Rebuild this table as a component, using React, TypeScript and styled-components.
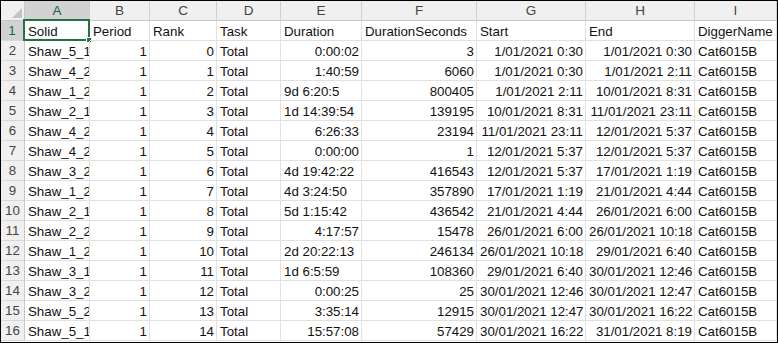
import styled, { createGlobalStyle } from 'styled-components';

const GlobalStyle = createGlobalStyle`
  body {
    margin: 0;
    background: #ffffff;
    font-family: 'Liberation Sans', Arial, sans-serif;
  }
`;

const colWidths = [24, 65, 60, 67, 64, 81, 115, 109, 109, 82];
const letters = ['A', 'B', 'C', 'D', 'E', 'F', 'G', 'H', 'I'];

const Frame = styled.div`
  width: 776px;
  height: 341px;
  border: 1px solid #000;
  overflow: hidden;
  background: #fff;
`;

const Sheet = styled.div`
  display: grid;
  grid-template-columns: ${colWidths.map((w) => `${w}px`).join(' ')};
  grid-auto-rows: 20px;
  font-size: 13.3px;
  color: #111;
`;

const ColHead = styled.div<{ $active?: boolean }>`
  background: ${({ $active }) => ($active ? '#d2d2d2' : '#f0f0f0')};
  color: ${({ $active }) => ($active ? '#0e6b3a' : '#444')};
  border-right: 1px solid #d0d0d0;
  border-bottom: ${({ $active }) => ($active ? '2px solid #217346' : '1px solid #c8c8c8')};
  display: flex;
  align-items: center;
  justify-content: center;
  box-sizing: border-box;
  font-size: 13.5px;
`;

const Corner = styled.div`
  background: #f0f0f0;
  border-right: 1px solid #c8c8c8;
  border-bottom: 1px solid #c8c8c8;
  box-sizing: border-box;
  display: flex;
  align-items: flex-end;
  justify-content: flex-end;
  padding: 0 2px 2px 0;
`;

const RowHead = styled.div<{ $active?: boolean }>`
  background: ${({ $active }) => ($active ? '#d2d2d2' : '#f0f0f0')};
  color: ${({ $active }) => ($active ? '#0e6b3a' : '#444')};
  border-right: ${({ $active }) => ($active ? '2px solid #217346' : '1px solid #c8c8c8')};
  border-bottom: 1px solid #d8d8d8;
  box-sizing: border-box;
  display: flex;
  align-items: center;
  justify-content: center;
  font-size: 13.3px;
`;

const Cell = styled.div<{ $right?: boolean }>`
  position: relative;
  border-right: 1px solid #e1e1e1;
  border-bottom: 1px solid #e1e1e1;
  box-sizing: border-box;
  padding: 1px 2px 0 3px;
  line-height: 19px;
  white-space: nowrap;
  overflow: hidden;
  text-align: ${({ $right }) => ($right ? 'right' : 'left')};
`;

const SelectedCell = styled(Cell)`
  overflow: visible;
`;

const SelBox = styled.div`
  position: absolute;
  left: -2px;
  top: -2px;
  right: -1px;
  bottom: -1px;
  border: 2px solid #217346;
  pointer-events: none;
`;

const SelHandle = styled.div`
  position: absolute;
  right: -4px;
  bottom: -4px;
  width: 6px;
  height: 6px;
  background: #217346;
  border: 1px solid #fff;
  box-sizing: border-box;
`;

type Row = {
  solid: string;
  rank: number;
  dur: string;
  secs: number;
  start: string;
  end: string;
};

const rows: Row[] = [
  { solid: 'Shaw_5_19_a', rank: 0, dur: '0:00:02', secs: 3, start: '1/01/2021 0:30', end: '1/01/2021 0:30' },
  { solid: 'Shaw_4_22_a', rank: 1, dur: '1:40:59', secs: 6060, start: '1/01/2021 0:30', end: '1/01/2021 2:11' },
  { solid: 'Shaw_1_21_a', rank: 2, dur: '9d 6:20:5', secs: 800405, start: '1/01/2021 2:11', end: '10/01/2021 8:31' },
  { solid: 'Shaw_2_19_a', rank: 3, dur: '1d 14:39:54', secs: 139195, start: '10/01/2021 8:31', end: '11/01/2021 23:11' },
  { solid: 'Shaw_4_22_b', rank: 4, dur: '6:26:33', secs: 23194, start: '11/01/2021 23:11', end: '12/01/2021 5:37' },
  { solid: 'Shaw_4_22_c', rank: 5, dur: '0:00:00', secs: 1, start: '12/01/2021 5:37', end: '12/01/2021 5:37' },
  { solid: 'Shaw_3_21_a', rank: 6, dur: '4d 19:42:22', secs: 416543, start: '12/01/2021 5:37', end: '17/01/2021 1:19' },
  { solid: 'Shaw_1_21_b', rank: 7, dur: '4d 3:24:50', secs: 357890, start: '17/01/2021 1:19', end: '21/01/2021 4:44' },
  { solid: 'Shaw_2_19_b', rank: 8, dur: '5d 1:15:42', secs: 436542, start: '21/01/2021 4:44', end: '26/01/2021 6:00' },
  { solid: 'Shaw_2_21_a', rank: 9, dur: '4:17:57', secs: 15478, start: '26/01/2021 6:00', end: '26/01/2021 10:18' },
  { solid: 'Shaw_1_21_c', rank: 10, dur: '2d 20:22:13', secs: 246134, start: '26/01/2021 10:18', end: '29/01/2021 6:40' },
  { solid: 'Shaw_3_19_a', rank: 11, dur: '1d 6:5:59', secs: 108360, start: '29/01/2021 6:40', end: '30/01/2021 12:46' },
  { solid: 'Shaw_3_21_b', rank: 12, dur: '0:00:25', secs: 25, start: '30/01/2021 12:46', end: '30/01/2021 12:47' },
  { solid: 'Shaw_5_21_a', rank: 13, dur: '3:35:14', secs: 12915, start: '30/01/2021 12:47', end: '30/01/2021 16:22' },
  { solid: 'Shaw_5_19_b', rank: 14, dur: '15:57:08', secs: 57429, start: '30/01/2021 16:22', end: '31/01/2021 8:19' },
];

const headers = ['Solid', 'Period', 'Rank', 'Task', 'Duration', 'DurationSeconds', 'Start', 'End', 'DiggerName'];

export default function App() {
  return (
    <>
      <GlobalStyle />
      <Frame>
        <Sheet>
          <Corner>
            <svg width="10" height="10" viewBox="0 0 10 10">
              <polygon points="10,0 10,10 0,10" fill="#c4c4c4" />
            </svg>
          </Corner>
          {letters.map((l, i) => (
            <ColHead key={l} $active={i === 0}>{l}</ColHead>
          ))}

          <RowHead $active>1</RowHead>
          {headers.map((h, i) =>
            i === 0 ? (
              <SelectedCell key={h}>
                {h}
                <SelBox>
                  <SelHandle />
                </SelBox>
              </SelectedCell>
            ) : (
              <Cell key={h}>{h}</Cell>
            )
          )}

          {rows.map((r, i) => {
            const textDur = r.dur.includes('d');
            return [
              <RowHead key={`h${i}`}>{i + 2}</RowHead>,
              <Cell key={`a${i}`}>{r.solid}</Cell>,
              <Cell key={`b${i}`} $right>1</Cell>,
              <Cell key={`c${i}`} $right>{r.rank}</Cell>,
              <Cell key={`d${i}`}>Total</Cell>,
              <Cell key={`e${i}`} $right={!textDur}>{r.dur}</Cell>,
              <Cell key={`f${i}`} $right>{r.secs}</Cell>,
              <Cell key={`g${i}`} $right>{r.start}</Cell>,
              <Cell key={`h2${i}`} $right>{r.end}</Cell>,
              <Cell key={`i${i}`}>Cat6015B</Cell>,
            ];
          })}
        </Sheet>
      </Frame>
    </>
  );
}
